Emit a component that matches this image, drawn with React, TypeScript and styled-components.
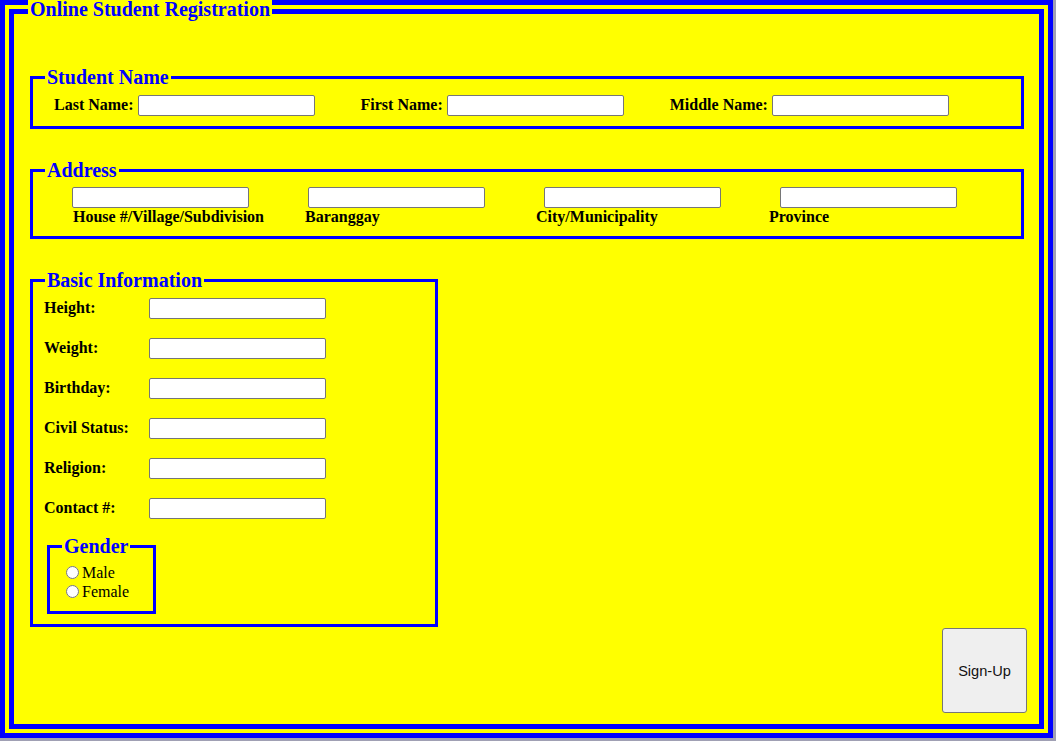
import React from 'react';
import styled, { createGlobalStyle } from 'styled-components';

const GlobalStyle = createGlobalStyle`
  html {
    background: #a0a0b4;
  }
  body {
    margin: 0;
    font-family: "Liberation Serif", "Times New Roman", serif;
    font-size: 16px;
    color: #000;
  }
`;

const Page = styled.form`
  width: 1053px;
  margin-top: -4px;
`;

const Outer = styled.fieldset`
  display: block;
  min-width: 0;
  margin: 0;
  padding: 0 13px 11px 14px;
  border: 14px double blue;
  background: yellow;
`;

const Legend = styled.legend`
  padding: 0 2px;
  color: blue;
  font-size: 20px;
  font-weight: bold;
`;

// the page title sits a little lower on the double border
const Title = styled(Legend)`
  padding-top: 4px;
  line-height: 18px;
`;

const Group = styled.fieldset<{ $top: number; $width?: number }>`
  min-width: 0;
  margin: ${(p) => p.$top}px 2px 0;
  padding: 0.35em 0.75em 0.625em;
  border: 3px solid blue;
  ${(p) => (p.$width ? `width: ${p.$width}px; box-sizing: border-box;` : '')}
`;

const Field = styled.input`
  box-sizing: border-box;
  width: 177px;
  height: 21px;
  padding: 1px 2px;
  border: 1px solid #767676;
  border-radius: 2px;
  background: #fff;
  font: 13.33px "Liberation Sans", Arial, sans-serif;
`;

const Label = styled.span`
  font-weight: bold;
`;

const NameRow = styled.div`
  display: flex;
  align-items: baseline;
  gap: 46px;
  padding-left: 9px;
`;

const NamePair = styled.label`
  display: flex;
  align-items: baseline;
  gap: 4px;
`;

const AddressGrid = styled.div`
  display: grid;
  grid-template-columns: repeat(4, 177px);
  column-gap: 59px;
  padding-left: 27px;
`;

const AddressCell = styled.div`
  display: flex;
  flex-direction: column;
`;

const Caption = styled.span<{ $shift: number }>`
  font-weight: bold;
  margin-left: ${(p) => p.$shift}px;
  white-space: nowrap;
`;

const InfoRow = styled.label`
  display: flex;
  align-items: baseline;
  margin: 0 0 19px -1px;
`;

const InfoLabel = styled.span`
  width: 105px;
  font-weight: bold;
`;

const Choice = styled.label`
  display: flex;
  align-items: center;
  line-height: 19px;
`;

const Radio = styled.input`
  margin: 0 3px 0 4px;
  width: 13px;
  height: 13px;
`;

const Actions = styled.div`
  display: flex;
  justify-content: flex-end;
  margin: 1px -1px 0 0;
`;

const SignUp = styled.button`
  width: 85px;
  height: 85px;
  background: #efefef;
  border: 1px solid #767676;
  border-radius: 3px;
  color: #111;
  font: 14.6px "Liberation Sans", Arial, sans-serif;
`;

const names = ['Last Name:', 'First Name:', 'Middle Name:'];

const address = [
  { text: 'House #/Village/Subdivision', shift: 1 },
  { text: 'Baranggay', shift: -3 },
  { text: 'City/Municipality', shift: -8 },
  { text: 'Province', shift: -11 },
];

const info = ['Height:', 'Weight:', 'Birthday:', 'Civil Status:', 'Religion:', 'Contact #:'];

const App = () => {
  return (
    <>
      <GlobalStyle />
      <Page onSubmit={(e) => e.preventDefault()}>
        <Outer>
          <Title>Online Student Registration</Title>

          <Group $top={48}>
            <Legend>Student Name</Legend>
            <NameRow>
              {names.map((n) => (
                <NamePair key={n}>
                  <Label>{n}</Label>
                  <Field type="text" />
                </NamePair>
              ))}
            </NameRow>
          </Group>

          <Group $top={30}>
            <Legend>Address</Legend>
            <AddressGrid>
              {address.map((a) => (
                <AddressCell key={a.text}>
                  <Field type="text" />
                  <Caption $shift={a.shift}>{a.text}</Caption>
                </AddressCell>
              ))}
            </AddressGrid>
          </Group>

          <Group $top={30} $width={408}>
            <Legend>Basic Information</Legend>
            {info.map((i) => (
              <InfoRow key={i}>
                <InfoLabel>{i}</InfoLabel>
                <Field type="text" />
              </InfoRow>
            ))}
            <Group $top={-3} $width={109}>
              <Legend>Gender</Legend>
              <Choice>
                <Radio type="radio" name="gender" />
                Male
              </Choice>
              <Choice>
                <Radio type="radio" name="gender" />
                Female
              </Choice>
            </Group>
          </Group>

          <Actions>
            <SignUp type="submit">Sign-Up</SignUp>
          </Actions>
        </Outer>
      </Page>
    </>
  );
};

export default App;
